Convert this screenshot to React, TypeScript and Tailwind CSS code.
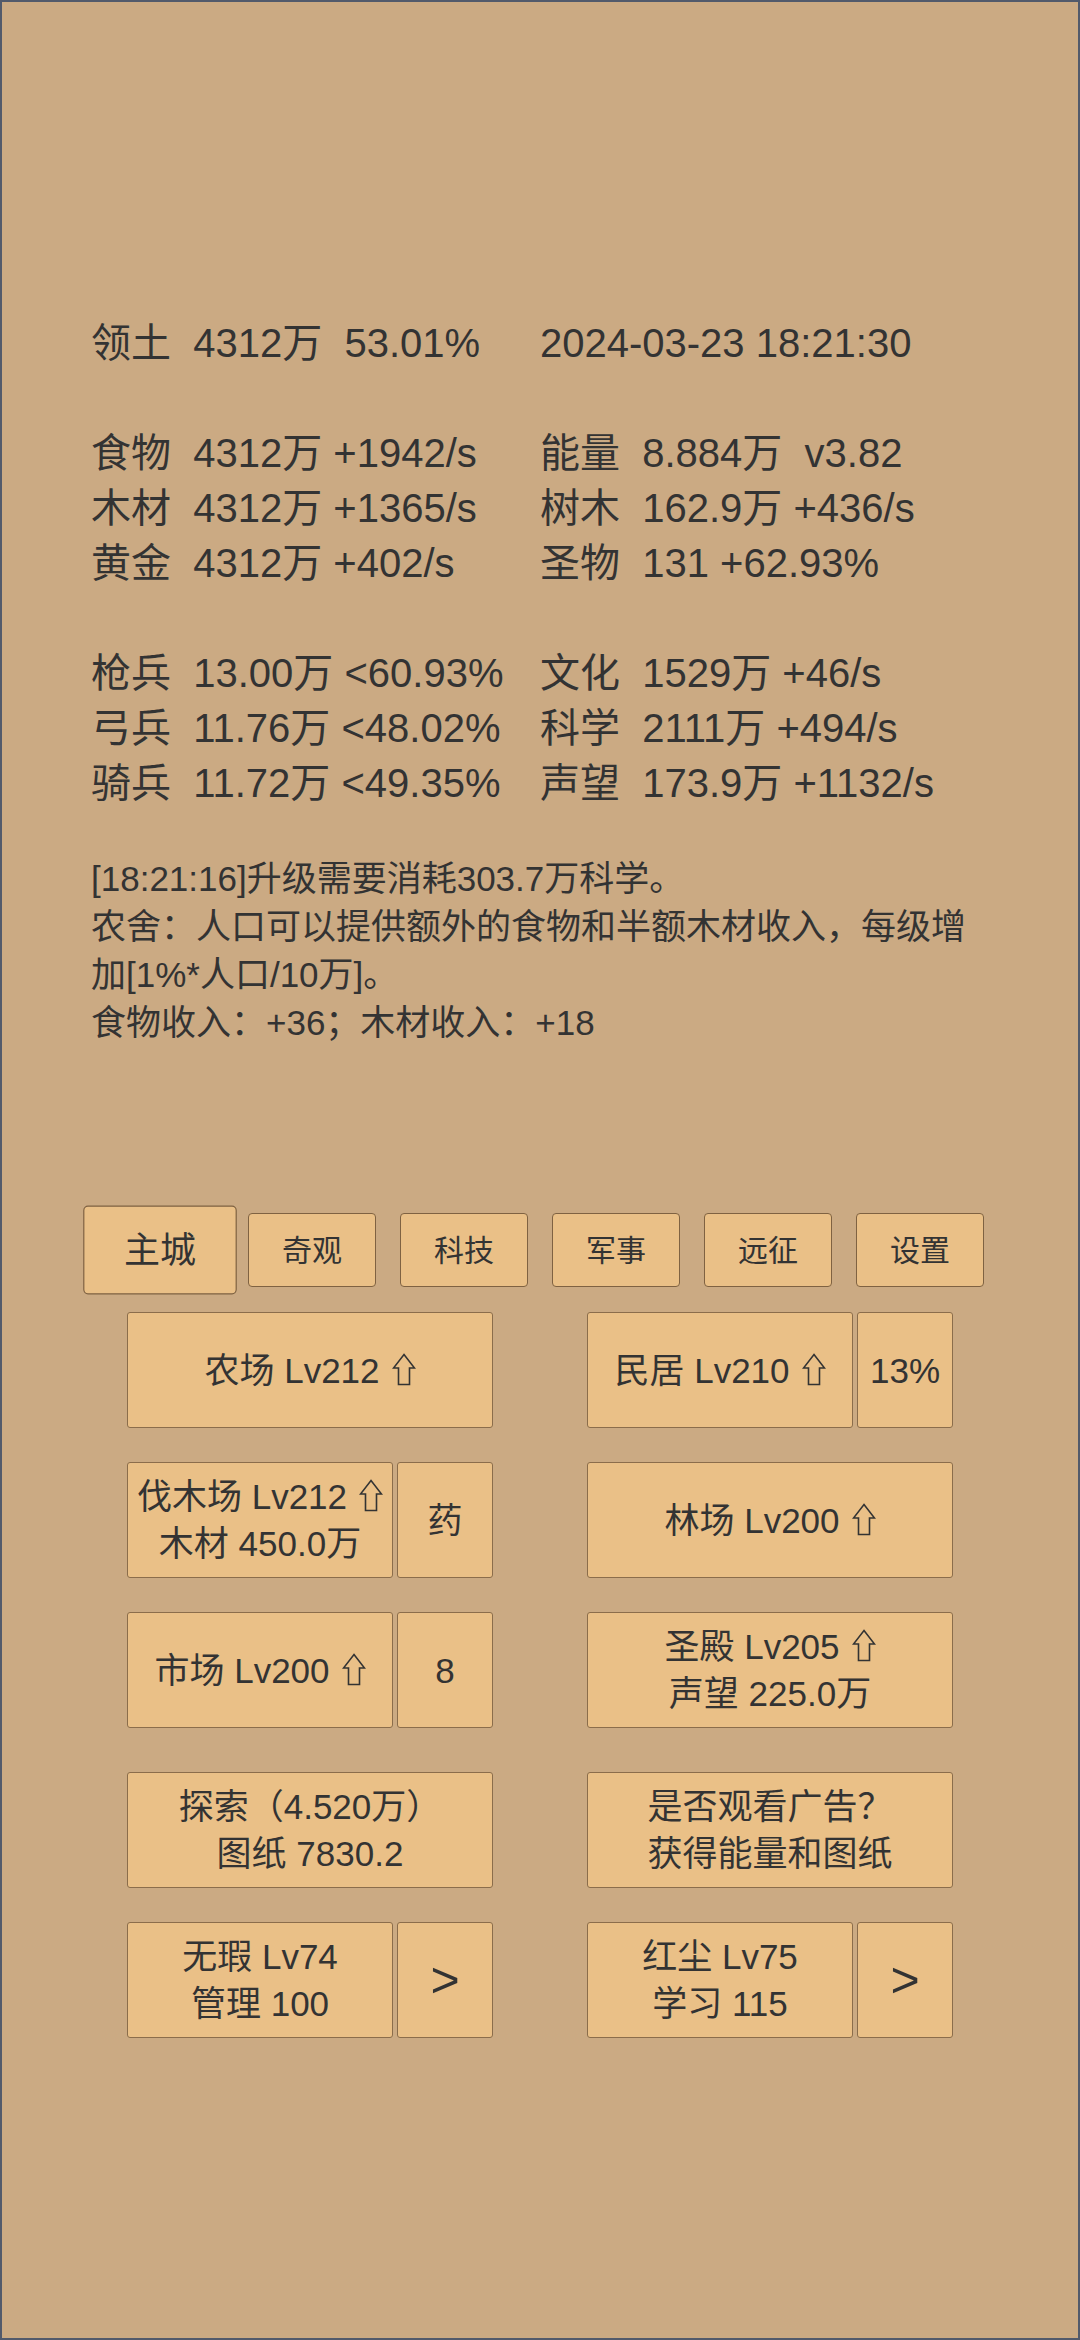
import React from 'react';

const font = "font-['Liberation_Sans','Noto_Sans_CJK_SC',sans-serif]";

const UpArrow = () => (
    <svg viewBox="0 0 24 33" className="inline-block w-[24px] h-[33px] ml-[12px] align-[-3px]">
        <path
            d="M12 1.5 L22.5 15 L17.5 15 L17.5 31.5 L6.5 31.5 L6.5 15 L1.5 15 Z"
            fill="none"
            stroke="#333333"
            strokeWidth="1.6"
            strokeLinejoin="miter"
        />
    </svg>
);

const btnBase =
    'flex flex-col items-center justify-center h-[116px] bg-[#eac087] border border-[#8b6d4b] rounded-[3px] leading-[47px] text-[#333333] whitespace-nowrap';

function Btn({ lines, w, big }: { lines: React.ReactNode[]; w: string; big?: boolean }) {
    return (
        <button className={`${btnBase} ${w} ${big ? 'text-[50px]' : 'text-[35px]'}`}>
            {lines.map((l, i) => (
                <div key={i}>{l}</div>
            ))}
        </button>
    );
}

// full-width slot or main + side box
function Slot({ main, side }: { main: React.ReactNode[]; side?: string }) {
    if (!side) return <Btn lines={main} w="w-[366px]" />;
    return (
        <div className="flex gap-[4px] w-[366px]">
            <Btn lines={main} w="w-[266px]" />
            <Btn lines={[side]} w="w-[96px]" big={side === '>'} />
        </div>
    );
}

const tabs = ['主城', '奇观', '科技', '军事', '远征', '设置'];

const stats: ([string, string] | null)[] = [
    ['领土  4312万  53.01%', '2024-03-23 18:21:30'],
    null,
    ['食物  4312万 +1942/s', '能量  8.884万  v3.82'],
    ['木材  4312万 +1365/s', '树木  162.9万 +436/s'],
    ['黄金  4312万 +402/s', '圣物  131 +62.93%'],
    null,
    ['枪兵  13.00万 <60.93%', '文化  1529万 +46/s'],
    ['弓兵  11.76万 <48.02%', '科学  2111万 +494/s'],
    ['骑兵  11.72万 <49.35%', '声望  173.9万 +1132/s'],
];

export default function App() {
    return (
        <div className={`w-[1080px] h-[2340px] bg-[#cbaa83] border-2 border-[#525a6b] text-[#333333] ${font}`}>
            {/* stats */}
            <div className="pt-[314px] pl-[89px] text-[40px] leading-[55px] whitespace-pre">
                {stats.map((row, i) =>
                    row ? (
                        <div key={i} className="grid grid-cols-[449px_1fr]">
                            <span>{row[0]}</span>
                            <span>{row[1]}</span>
                        </div>
                    ) : (
                        <div key={i} className="h-[55px]" />
                    )
                )}
            </div>

            {/* log */}
            <div className="mt-[44px] pl-[89px] text-[35px] leading-[48px] whitespace-nowrap">
                <p>[18:21:16]升级需要消耗303.7万科学。</p>
                <p>
                    农舍：人口可以提供额外的食物和半额木材收入，每级增
                    <br />
                    加[1%*人口/10万]。
                </p>
                <p>食物收入：+36；木材收入：+18</p>
            </div>

            {/* tabs */}
            <div className="mt-[166px] flex justify-center gap-[24px]">
                {tabs.map((t, i) => (
                    <button
                        key={t}
                        className={`w-[128px] h-[74px] flex items-center justify-center bg-[#eac087] border border-[#7f6242] rounded-[4px] text-[30px] text-[#333333] ${
                            i === 0 ? 'scale-[1.2]' : ''
                        }`}
                    >
                        {t}
                    </button>
                ))}
            </div>

            {/* buildings */}
            <div className="mt-[25px] flex flex-col gap-[34px]">
                <div className="flex justify-center gap-[94px]">
                    <Slot main={[<>农场 Lv212<UpArrow /></>]} />
                    <Slot main={[<>民居 Lv210<UpArrow /></>]} side="13%" />
                </div>
                <div className="flex justify-center gap-[94px]">
                    <Slot main={[<>伐木场 Lv212<UpArrow /></>, '木材 450.0万']} side="药" />
                    <Slot main={[<>林场 Lv200<UpArrow /></>]} />
                </div>
                <div className="flex justify-center gap-[94px]">
                    <Slot main={[<>市场 Lv200<UpArrow /></>]} side="8" />
                    <Slot main={[<>圣殿 Lv205<UpArrow /></>, '声望 225.0万']} />
                </div>
                <div className="mt-[10px] flex justify-center gap-[94px]">
                    <Slot main={['探索（4.520万）', '图纸 7830.2']} />
                    <Slot main={['是否观看广告？', '获得能量和图纸']} />
                </div>
                <div className="flex justify-center gap-[94px]">
                    <Slot main={['无瑕 Lv74', '管理 100']} side=">" />
                    <Slot main={['红尘 Lv75', '学习 115']} side=">" />
                </div>
            </div>
        </div>
    );
}
